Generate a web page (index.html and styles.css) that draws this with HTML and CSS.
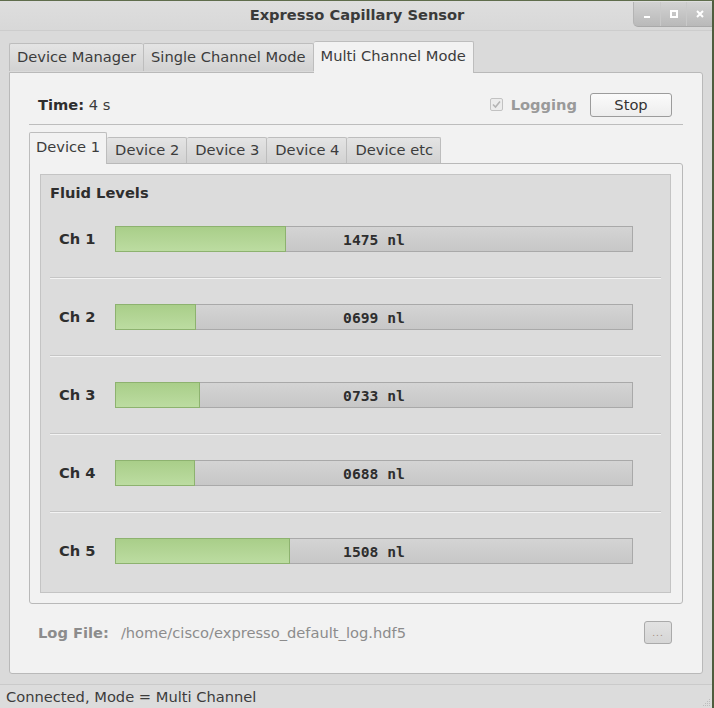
FILE: index.html
```html
<!DOCTYPE html>
<html>
<head>
<meta charset="utf-8">
<link rel="stylesheet" href="styles.css">
</head>
<body>
<div class="window">
  <div class="titlebar">
    <span class="title">Expresso Capillary Sensor</span>
    <div class="wincontrols">
      <span class="wbtn"><svg width="10" height="10" viewBox="0 0 10 10"><rect x="2" y="7" width="6" height="2" fill="#fff"/></svg></span>
      <span class="wbtn"><svg width="10" height="10" viewBox="0 0 10 10"><rect x="2" y="2" width="6" height="6" fill="none" stroke="#fff" stroke-width="2"/></svg></span>
      <span class="wbtn"><svg width="10" height="10" viewBox="0 0 10 10"><path d="M2 2 L8 8 M8 2 L2 8" stroke="#fff" stroke-width="2"/></svg></span>
    </div>
  </div>
  <div class="content">
    <div class="tabbar">
      <div class="tab">Device Manager</div>
      <div class="tab">Single Channel Mode</div>
      <div class="tab active">Multi Channel Mode</div>
    </div>
    <div class="pane">
      <div class="header">
        <div class="time"><b>Time:</b> 4 s</div>
        <div class="spacer"></div>
        <div class="logging">
          <svg class="chk" width="13" height="13" viewBox="0 0 13 13"><rect x="0.5" y="0.5" width="12" height="12" rx="1.5" fill="#ececec" stroke="#c2c2c2"/><path d="M3 6.5 L5.5 9 L10 3.5" fill="none" stroke="#b4b4b4" stroke-width="1.6"/></svg>
          <span>Logging</span>
        </div>
        <button class="btn stop">Stop</button>
      </div>
      <div class="hsep"></div>
      <div class="subtabbar">
        <div class="stab active">Device 1</div>
        <div class="stab">Device 2</div>
        <div class="stab">Device 3</div>
        <div class="stab">Device 4</div>
        <div class="stab">Device etc</div>
      </div>
      <div class="subpane">
        <div class="group">
          <div class="gtitle">Fluid Levels</div>
          <div class="row"><span class="ch">Ch 1</span><div class="bar"><div class="fill" style="width:171px"></div><span class="val">1475 nl</span></div></div>
          <div class="rsep"></div>
          <div class="row"><span class="ch">Ch 2</span><div class="bar"><div class="fill" style="width:81px"></div><span class="val">0699 nl</span></div></div>
          <div class="rsep"></div>
          <div class="row"><span class="ch">Ch 3</span><div class="bar"><div class="fill" style="width:85px"></div><span class="val">0733 nl</span></div></div>
          <div class="rsep"></div>
          <div class="row"><span class="ch">Ch 4</span><div class="bar"><div class="fill" style="width:80px"></div><span class="val">0688 nl</span></div></div>
          <div class="rsep"></div>
          <div class="row"><span class="ch">Ch 5</span><div class="bar"><div class="fill" style="width:175px"></div><span class="val">1508 nl</span></div></div>
        </div>
      </div>
      <div class="logrow">
        <b class="loglabel">Log File:</b>
        <span class="logpath">/home/cisco/expresso_default_log.hdf5</span>
        <div class="spacer"></div>
        <button class="btn dots">...</button>
      </div>
    </div>
  </div>
  <div class="statusbar">
    <span>Connected, Mode = Multi Channel</span>
    <svg class="grip" width="10" height="10" viewBox="0 0 10 10">
      <g fill="#bdbdbd"><rect x="8" y="2" width="1" height="1"/><rect x="6" y="4" width="1" height="1"/><rect x="8" y="4" width="1" height="1"/><rect x="4" y="6" width="1" height="1"/><rect x="6" y="6" width="1" height="1"/><rect x="8" y="6" width="1" height="1"/><rect x="2" y="8" width="1" height="1"/><rect x="4" y="8" width="1" height="1"/><rect x="6" y="8" width="1" height="1"/><rect x="8" y="8" width="1" height="1"/></g>
    </svg>
  </div>
</div>
</body>
</html>
```
FILE: styles.css
```css
* { box-sizing: border-box; }
html, body { margin: 0; padding: 0; }
body {
  width: 714px;
  height: 708px;
  overflow: hidden;
  font-family: "DejaVu Sans", sans-serif;
  font-size: 14.67px;
  color: #3c3c3c;
  background: #dadada;
}
.window {
  width: 714px;
  height: 708px;
  display: flex;
  flex-direction: column;
  background: #dadada;
  border-top: 1px solid #5f6d4c;
  border-right: 2px solid #4f5d3e;
  position: relative;
}
.titlebar {
  height: 30px;
  flex: none;
  display: flex;
  align-items: center;
  justify-content: center;
  background: linear-gradient(#dedede, #d8d8d8);
  border-bottom: 1px solid #cdcdcd;
}
.title {
  font-weight: bold;
  color: #3a3a3a;
  margin-left: 2px;
  margin-top: -3px;
}
.wincontrols {
  position: absolute;
  top: 1px;
  right: 0;
  height: 25px;
  display: flex;
  border-bottom-left-radius: 5px;
  background: linear-gradient(#d2d2d2, #b9b9b9);
  border-left: 1px solid #b4b4b4;
  border-bottom: 1px solid #a9a9a9;
  overflow: hidden;
}
.wbtn {
  width: 26px;
  display: flex;
  align-items: center;
  justify-content: center;
  border-left: 1px solid #c9c9c9;
}
.wbtn:first-child { border-left: none; }
.content {
  flex: 1;
  display: flex;
  flex-direction: column;
  padding: 10px 9px 10px 9px;
}
.tabbar {
  display: flex;
  align-items: flex-end;
  height: 31px;
  flex: none;
  position: relative;
  z-index: 1;
}
.tab {
  height: 28px;
  padding: 0 7px 2px 7px;
  display: flex;
  align-items: center;
  border: 1px solid #bdbdbd;
  border-bottom: none;
  border-right: none;
  border-radius: 2px 2px 0 0;
  background: linear-gradient(#e4e4e4, #d2d2d2);
  color: #3c3c3c;
  margin-bottom: 1px;
}
.tab:nth-child(2) { border-right: 1px solid #bdbdbd; }
.tab.active {
  height: 32px;
  margin-bottom: -1px;
  background: #f2f2f2;
  border-right: 1px solid #bdbdbd;
  border-left: none;
  padding: 0 7px 5px 7px;
}
.pane {
  flex: 1;
  background: #f2f2f2;
  border: 1px solid #b9b9b9;
  border-radius: 0 3px 3px 3px;
  padding: 18px 19px 0 19px;
  display: flex;
  flex-direction: column;
}
.header {
  display: flex;
  align-items: center;
  height: 26px;
  padding: 0 11px 0 9px;
  flex: none;
}
.time b { color: #2e2e2e; }
.spacer { flex: 1; }
.logging {
  display: flex;
  align-items: center;
  margin-right: 13px;
  color: #9a9a9a;
  font-weight: bold;
}
.chk { margin-right: 8px; margin-top: 1px; }
.btn {
  font-family: "DejaVu Sans", sans-serif;
  font-size: 14.67px;
  color: #333;
  border: 1px solid #9c9c9c;
  border-radius: 3px;
  background: linear-gradient(#fbfbfb, #ededed);
  padding: 0;
}
.stop { width: 82px; height: 24px; margin-top: 1px; }
.hsep {
  height: 1px;
  background: #bdbdbd;
  margin-top: 7px;
  flex: none;
}
.subtabbar {
  display: flex;
  align-items: flex-end;
  height: 30px;
  margin-top: 8px;
  flex: none;
  position: relative;
  z-index: 1;
}
.stab {
  height: 26px;
  padding: 0 7px 2px 8px;
  display: flex;
  align-items: center;
  border: 1px solid #bdbdbd;
  border-bottom: none;
  border-left: none;
  border-radius: 2px 2px 0 0;
  background: linear-gradient(#e4e4e4, #d2d2d2);
}
.stab.active {
  height: 32px;
  margin-bottom: -1px;
  background: #f2f2f2;
  border-left: 1px solid #bdbdbd;
  padding: 0 6px 5px 6px;
}
.subpane {
  height: 441px;
  flex: none;
  background: #f2f2f2;
  border: 1px solid #b9b9b9;
  border-radius: 0 3px 3px 3px;
  padding: 10px 11px 10px 10px;
}
.group {
  height: 419px;
  background: #dcdcdc;
  border: 1px solid #c4c4c4;
  padding: 9px 0 0 0;
}
.gtitle {
  font-weight: bold;
  color: #2e2e2e;
  line-height: 17px;
  padding-left: 9px;
}
.row {
  height: 76px;
  display: flex;
  align-items: center;
  padding-left: 18px;
}
.ch {
  width: 56px;
  font-weight: bold;
  color: #2e2e2e;
  margin-top: -1px;
}
.bar {
  position: relative;
  width: 518px;
  height: 26px;
  border: 1px solid #a9a9a9;
  background: linear-gradient(#d4d4d4, #c7c7c7);
  display: flex;
  align-items: center;
  justify-content: center;
}
.fill {
  position: absolute;
  left: -1px;
  top: -1px;
  bottom: -1px;
  border: 1px solid #8db26f;
  background: linear-gradient(#a9ce89, #bcdca1);
}
.val {
  position: relative;
  font-family: "DejaVu Sans Mono", monospace;
  font-weight: bold;
  color: #2e2e2e;
}
.rsep {
  height: 2px;
  margin: 0 9px;
  border-top: 1px solid #c6c6c6;
  border-bottom: 1px solid #f3f3f3;
}
.logrow {
  display: flex;
  align-items: center;
  height: 23px;
  margin-top: 17px;
  padding: 0 11px 0 9px;
  flex: none;
}
.loglabel { color: #8c8c8c; margin-right: 12px; }
.logpath { color: #8c8c8c; }
.dots {
  width: 28px;
  height: 23px;
  font-size: 9px;
  color: #a08a7a;
  background: linear-gradient(#e2e2e2, #d6d6d6);
  border-color: #aaaaaa;
  letter-spacing: 1px;
}
.statusbar {
  height: 24px;
  flex: none;
  display: flex;
  align-items: center;
  padding-left: 6px;
  border-top: 1px solid #cacaca;
  background: #dcdcdc;
  position: relative;
}
.grip {
  position: absolute;
  right: 1px;
  bottom: 1px;
}
```
